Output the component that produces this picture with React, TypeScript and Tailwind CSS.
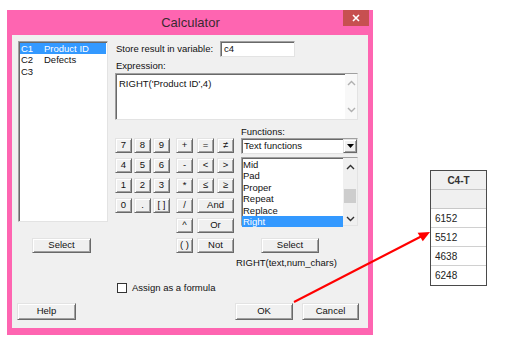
import React from "react";

const btn =
  "flex items-center justify-center bg-[#f0f0f0] border border-t-[#e3e3e3] border-l-[#e3e3e3] border-r-[#696969] border-b-[#696969] shadow-[inset_1px_1px_0_#ffffff,inset_-1px_-1px_0_#a0a0a0] text-[#111]";

const sunken =
  "bg-white border border-t-[#a0a0a0] border-l-[#a0a0a0] border-r-[#e3e3e3] border-b-[#e3e3e3] shadow-[inset_1px_1px_0_#696969]";

function Up({ c = "#606060" }: { c?: string }) {
  return (
    <svg width="9" height="6" viewBox="0 0 9 6">
      <polyline points="1,5 4.5,1.5 8,5" fill="none" stroke={c} strokeWidth="1.4" />
    </svg>
  );
}
function Down({ c = "#606060" }: { c?: string }) {
  return (
    <svg width="9" height="6" viewBox="0 0 9 6">
      <polyline points="1,1 4.5,4.5 8,1" fill="none" stroke={c} strokeWidth="1.4" />
    </svg>
  );
}

function K({ label, span = false }: { label: string; span?: boolean }) {
  return (
    <div className={`${btn} h-[15px] ${span ? "col-span-2 w-[37px]" : "w-[17px]"}`}>
      {label}
    </div>
  );
}

export default function App() {
  const funcs = ["Mid", "Pad", "Proper", "Repeat", "Replace", "Right"];
  return (
    <div className="relative w-[506px] h-[341px] bg-white overflow-hidden flex items-start font-['Liberation_Sans',Arial,sans-serif] text-[9.5px] text-[#111]">
      {/* Dialog */}
      <div className="ml-[7px] mt-[10px] w-[366px] h-[325px] bg-[#fe65b1] flex flex-col px-[5px] pb-[7px]">
        <div className="h-[25px] flex items-start">
          <div className="w-[26px]" />
          <div className="flex-1 text-center text-[13px] leading-[25px] text-[#3a2a30]">Calculator</div>
          <div className="w-[26px] h-[16px] mr-[-1px] bg-[#c75050] flex items-center justify-center">
            <svg width="8" height="8" viewBox="0 0 8 8">
              <path d="M1 1 L7 7 M7 1 L1 7" stroke="#fff" strokeWidth="1.6" />
            </svg>
          </div>
        </div>
        <div className="flex-1 bg-[#f0f0f0] flex flex-col pt-[6px] pl-[6px]">
          <div className="flex items-start">
            {/* Left column */}
            <div className="w-[90px] flex flex-col">
              <div className={`${sunken} h-[181px] pt-[1px] pl-[1px] pr-[1px]`}>
                <div className="h-[11.3px] leading-[11.3px] bg-[#3399ff] text-white flex">
                  <span className="w-[24px] pl-[1px]">C1</span>
                  <span>Product ID</span>
                </div>
                <div className="h-[11.3px] leading-[11.3px] flex">
                  <span className="w-[24px] pl-[1px]">C2</span>
                  <span>Defects</span>
                </div>
                <div className="h-[11.3px] leading-[11.3px] flex">
                  <span className="w-[24px] pl-[1px]">C3</span>
                </div>
              </div>
              <div className={`${btn} mt-[16px] ml-[14px] w-[59px] h-[15px]`}>Select</div>
            </div>
            {/* Right column */}
            <div className="ml-[7px] w-[244px] flex flex-col">
              <div className="flex items-center h-[16px]">
                <div className="w-[105px] pl-[1px]">Store result in variable:</div>
                <div className={`${sunken} w-[75px] h-[16px] pl-[3px] leading-[14px]`}>c4</div>
              </div>
              <div className="mt-[2px] h-[14px] leading-[14px] pl-[1px]">Expression:</div>
              <div className={`${sunken} w-[243px] h-[47px] flex`}>
                <div className="flex-1 pl-[3px] pt-[3px]">RIGHT('Product ID',4)</div>
                <div className="w-[12px] bg-[#f8f8f8] flex flex-col items-center justify-between py-[6px]">
                  <Up c="#b0b0b0" />
                  <Down c="#b0b0b0" />
                </div>
              </div>
              <div className="flex items-start mt-[5px]">
                {/* Keypad */}
                <div className="mt-[13px] w-[119px] grid grid-cols-[19px_19px_23px_21px_20px_17px] auto-rows-[20px]">
                  <K label="7" />
                  <K label="8" />
                  <K label="9" />
                  <K label="+" />
                  <K label="=" />
                  <K label="≠" />
                  <K label="4" />
                  <K label="5" />
                  <K label="6" />
                  <K label="-" />
                  <K label="<" />
                  <K label=">" />
                  <K label="1" />
                  <K label="2" />
                  <K label="3" />
                  <K label="*" />
                  <K label="≤" />
                  <K label="≥" />
                  <K label="0" />
                  <K label="." />
                  <K label="[ ]" />
                  <K label="/" />
                  <K label="And" span />
                  <div />
                  <div />
                  <div />
                  <K label="^" />
                  <K label="Or" span />
                  <div />
                  <div />
                  <div />
                  <K label="( )" />
                  <K label="Not" span />
                </div>
                {/* Functions */}
                <div className="ml-[6px] w-[118px] flex flex-col">
                  <div className="h-[13px] leading-[13px] pl-[1px]">Functions:</div>
                  <div className={`${sunken} ml-[1px] w-[117px] h-[16px] flex items-stretch`}>
                    <div className="flex-1 pl-[2px] leading-[14px]">Text functions</div>
                    <div className={`${btn} w-[14px]`}>
                      <svg width="7" height="4" viewBox="0 0 7 4">
                        <polygon points="0,0 7,0 3.5,4" fill="#000" />
                      </svg>
                    </div>
                  </div>
                  <div className={`${sunken} mt-[3px] ml-[1px] w-[117px] h-[69px] flex`}>
                    <div className="flex-1 pt-[1px]">
                      {funcs.map((f) => (
                        <div
                          key={f}
                          className={`h-[11.4px] leading-[11.4px] pl-[1px] ${f === "Right" ? "bg-[#3399ff] text-white" : ""}`}
                        >
                          {f}
                        </div>
                      ))}
                    </div>
                    <div className="w-[14px] bg-[#f0f0f0] flex flex-col items-center pt-[6px] pb-[3px]">
                      <Up c="#303030" />
                      <div className="mt-[19px] w-[12px] h-[14px] bg-[#cdcdcd]" />
                      <div className="flex-1" />
                      <Down c="#303030" />
                    </div>
                  </div>
                  <div className={`${btn} mt-[12px] ml-[21px] w-[58px] h-[15px]`}>Select</div>
                  <div className="mt-[4px] ml-[-4px] h-[12px] leading-[12px] whitespace-nowrap">RIGHT(text,num_chars)</div>
                </div>
              </div>
            </div>
          </div>
          {/* Checkbox */}
          <div className="mt-[14px] h-[10px] pl-[99px] flex items-center">
            <div className="w-[10px] h-[10px] bg-white border border-[#333]" />
            <div className="ml-[5px] leading-[10px]">Assign as a formula</div>
          </div>
          {/* Bottom buttons */}
          <div className="mt-[10px] flex items-start">
            <div className={`${btn} ml-[-1px] w-[59px] h-[17px]`}>Help</div>
            <div className={`${btn} ml-[159px] w-[58px] h-[17px]`}>OK</div>
            <div className={`${btn} ml-[9px] w-[57px] h-[17px]`}>Cancel</div>
          </div>
        </div>
      </div>

      {/* Worksheet column */}
      <div className="ml-[57px] mt-[170px] w-[57px] border border-[#4a4a4a] text-[10px] bg-white">
        <div className="h-[19px] bg-[#f0f0f0] border-b border-[#c8c8c8] flex items-center justify-center font-bold text-[#333]">
          C4-T
        </div>
        <div className="h-[19px] bg-[#f0f0f0] border-b border-[#c8c8c8]" />
        {["6152", "5512", "4638", "6248"].map((v, i) => (
          <div
            key={v}
            className={`h-[19px] flex items-center pl-[4px] text-[#222] ${i < 3 ? "border-b border-[#d0d0d0]" : ""}`}
          >
            {v}
          </div>
        ))}
      </div>

      {/* Red arrow */}
      <svg className="absolute left-0 top-0 pointer-events-none" width="506" height="341" viewBox="0 0 506 341">
        <line x1="294" y1="302" x2="421" y2="236.5" stroke="#ff0000" strokeWidth="2" />
        <polygon points="430,232 417.6,232.8 422.8,241.2" fill="#ff0000" />
      </svg>
    </div>
  );
}
